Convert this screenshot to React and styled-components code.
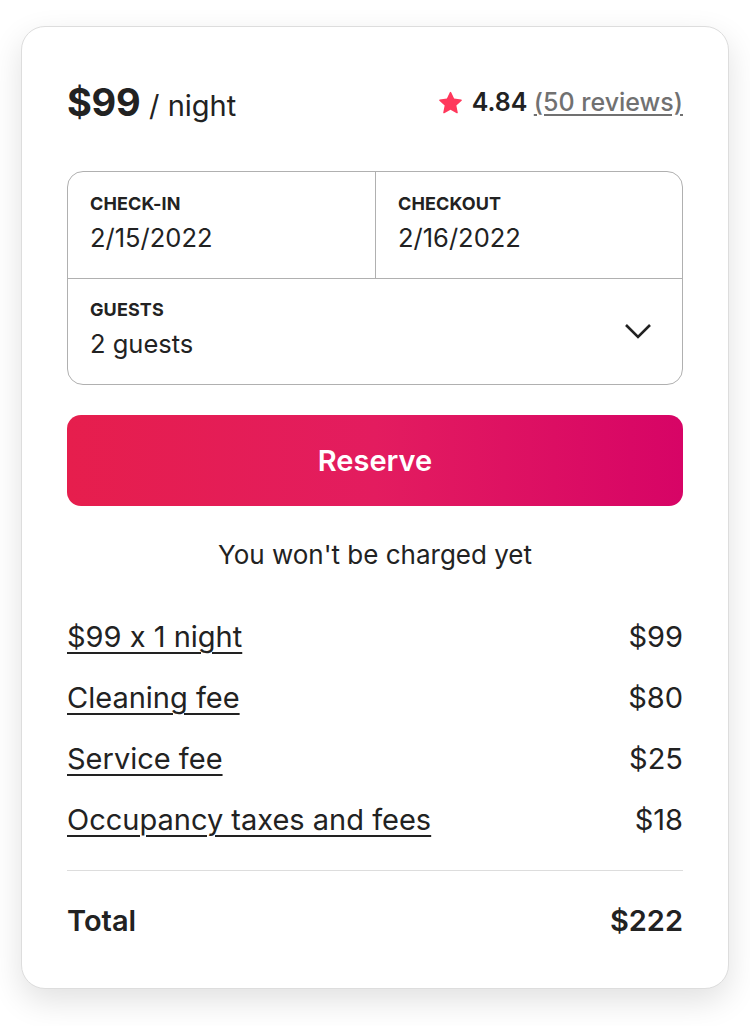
import React from "react";
import styled, { createGlobalStyle } from "styled-components";

const GlobalStyle = createGlobalStyle`
  html, body {
    margin: 0;
    padding: 0;
    background: #ffffff;
    font-family: "Inter", "Noto Sans", sans-serif;
    font-feature-settings: "calt" 0;
    color: #222222;
  }
`;

const Page = styled.div`
  padding: 26px 21px 0 21px;
  width: 750px;
  height: 1026px;
  box-sizing: border-box;
`;

const Card = styled.div`
  box-sizing: border-box;
  width: 708px;
  border: 1px solid #dddddd;
  border-radius: 24px;
  box-shadow: 0 12px 32px rgba(0, 0, 0, 0.12);
  padding: 45px 45px 37px 45px;
  background: #fff;
`;

const Header = styled.div`
  display: flex;
  justify-content: space-between;
  align-items: center;
  height: 60px;
  margin-bottom: 39px;
`;

const Price = styled.div`
  font-size: 38px;
  font-weight: 700;
  letter-spacing: -0.3px;
  line-height: 1;
  span {
    font-size: 29px;
    font-weight: 400;
    letter-spacing: 0;
  }
`;

const Rating = styled.div`
  display: flex;
  align-items: center;
  gap: 10px;
  font-size: 25px;
  font-weight: 600;
  line-height: 1;
  a {
    color: #717171;
    font-weight: 500;
    text-decoration: underline;
    text-underline-offset: 3px;
  }
`;

const Picker = styled.div`
  border: 1px solid #b0b0b0;
  border-radius: 16px;
  overflow: hidden;
`;

const DateRow = styled.div`
  display: grid;
  grid-template-columns: 1fr 1fr;
  border-bottom: 1px solid #b0b0b0;
`;

const Field = styled.div`
  display: flex;
  justify-content: space-between;
  align-items: center;
  padding: 0 22px 4px 22px;
  height: ${(p) => p.h || 106}px;
  box-sizing: border-box;
  border-left: ${(p) => (p.divided ? "1px solid #b0b0b0" : "none")};
`;

const Label = styled.div`
  font-size: 18px;
  font-weight: 700;
  letter-spacing: 0.1px;
  line-height: 22px;
  margin-bottom: 7px;
`;

const Value = styled.div`
  font-size: 25.5px;
  font-weight: 400;
  line-height: 32px;
  color: #222;
`;

const Button = styled.button`
  display: block;
  width: 100%;
  height: 91px;
  margin-top: 30px;
  border: none;
  border-radius: 14px;
  background: linear-gradient(to right, #e61e4d 0%, #e31c5f 50%, #d70466 100%);
  color: #fff;
  font-family: inherit;
  font-size: 29px;
  font-weight: 600;
`;

const Note = styled.div`
  text-align: center;
  font-size: 26px;
  line-height: 30px;
  margin-top: 34px;
  margin-bottom: 36px;
`;

const Row = styled.div`
  display: flex;
  justify-content: space-between;
  align-items: center;
  font-size: 29px;
  height: 61px;
  u {
    text-underline-offset: 5px;
    text-decoration-thickness: 1.5px;
  }
`;

const Divider = styled.div`
  height: 1px;
  background: #dddddd;
  margin-top: 20px;
`;

const TotalRow = styled(Row)`
  font-weight: 600;
  margin-top: 19px;
`;

const fees = [
  ["$99 x 1 night", "$99"],
  ["Cleaning fee", "$80"],
  ["Service fee", "$25"],
  ["Occupancy taxes and fees", "$18"],
];

export default function App() {
  return (
    <Page>
      <GlobalStyle />
      <Card>
        <Header>
          <Price>
            $99 <span>/ night</span>
          </Price>
          <Rating>
            <svg width="23" height="23" viewBox="0 0 32 32" fill="#ff385c">
              <path d="M15.1 1.58l-4.13 8.88-9.86 1.27a1 1 0 0 0-.54 1.74l7.3 6.57-1.97 9.85a1 1 0 0 0 1.48 1.06l8.62-5 8.63 5a1 1 0 0 0 1.48-1.06l-1.97-9.85 7.3-6.57a1 1 0 0 0-.55-1.73l-9.86-1.28-4.12-8.88a1 1 0 0 0-1.82 0z" />
            </svg>
            <span>
              4.84 <a>(50 reviews)</a>
            </span>
          </Rating>
        </Header>
        <Picker>
          <DateRow>
            <Field>
              <div>
                <Label>CHECK-IN</Label>
                <Value>2/15/2022</Value>
              </div>
            </Field>
            <Field divided>
              <div>
                <Label>CHECKOUT</Label>
                <Value>2/16/2022</Value>
              </div>
            </Field>
          </DateRow>
          <Field h={105}>
            <div>
              <Label>GUESTS</Label>
              <Value>2 guests</Value>
            </div>
            <svg width="32" height="32" viewBox="0 0 32 32" fill="none" stroke="#222" strokeWidth="2.6" style={{ marginRight: 6 }}>
              <path d="M4 11l12 12 12-12" />
            </svg>
          </Field>
        </Picker>
        <Button>Reserve</Button>
        <Note>You won't be charged yet</Note>
        {fees.map(([label, amount]) => (
          <Row key={label}>
            <u>{label}</u>
            <span>{amount}</span>
          </Row>
        ))}
        <Divider />
        <TotalRow>
          <span>Total</span>
          <span>$222</span>
        </TotalRow>
      </Card>
    </Page>
  );
}
